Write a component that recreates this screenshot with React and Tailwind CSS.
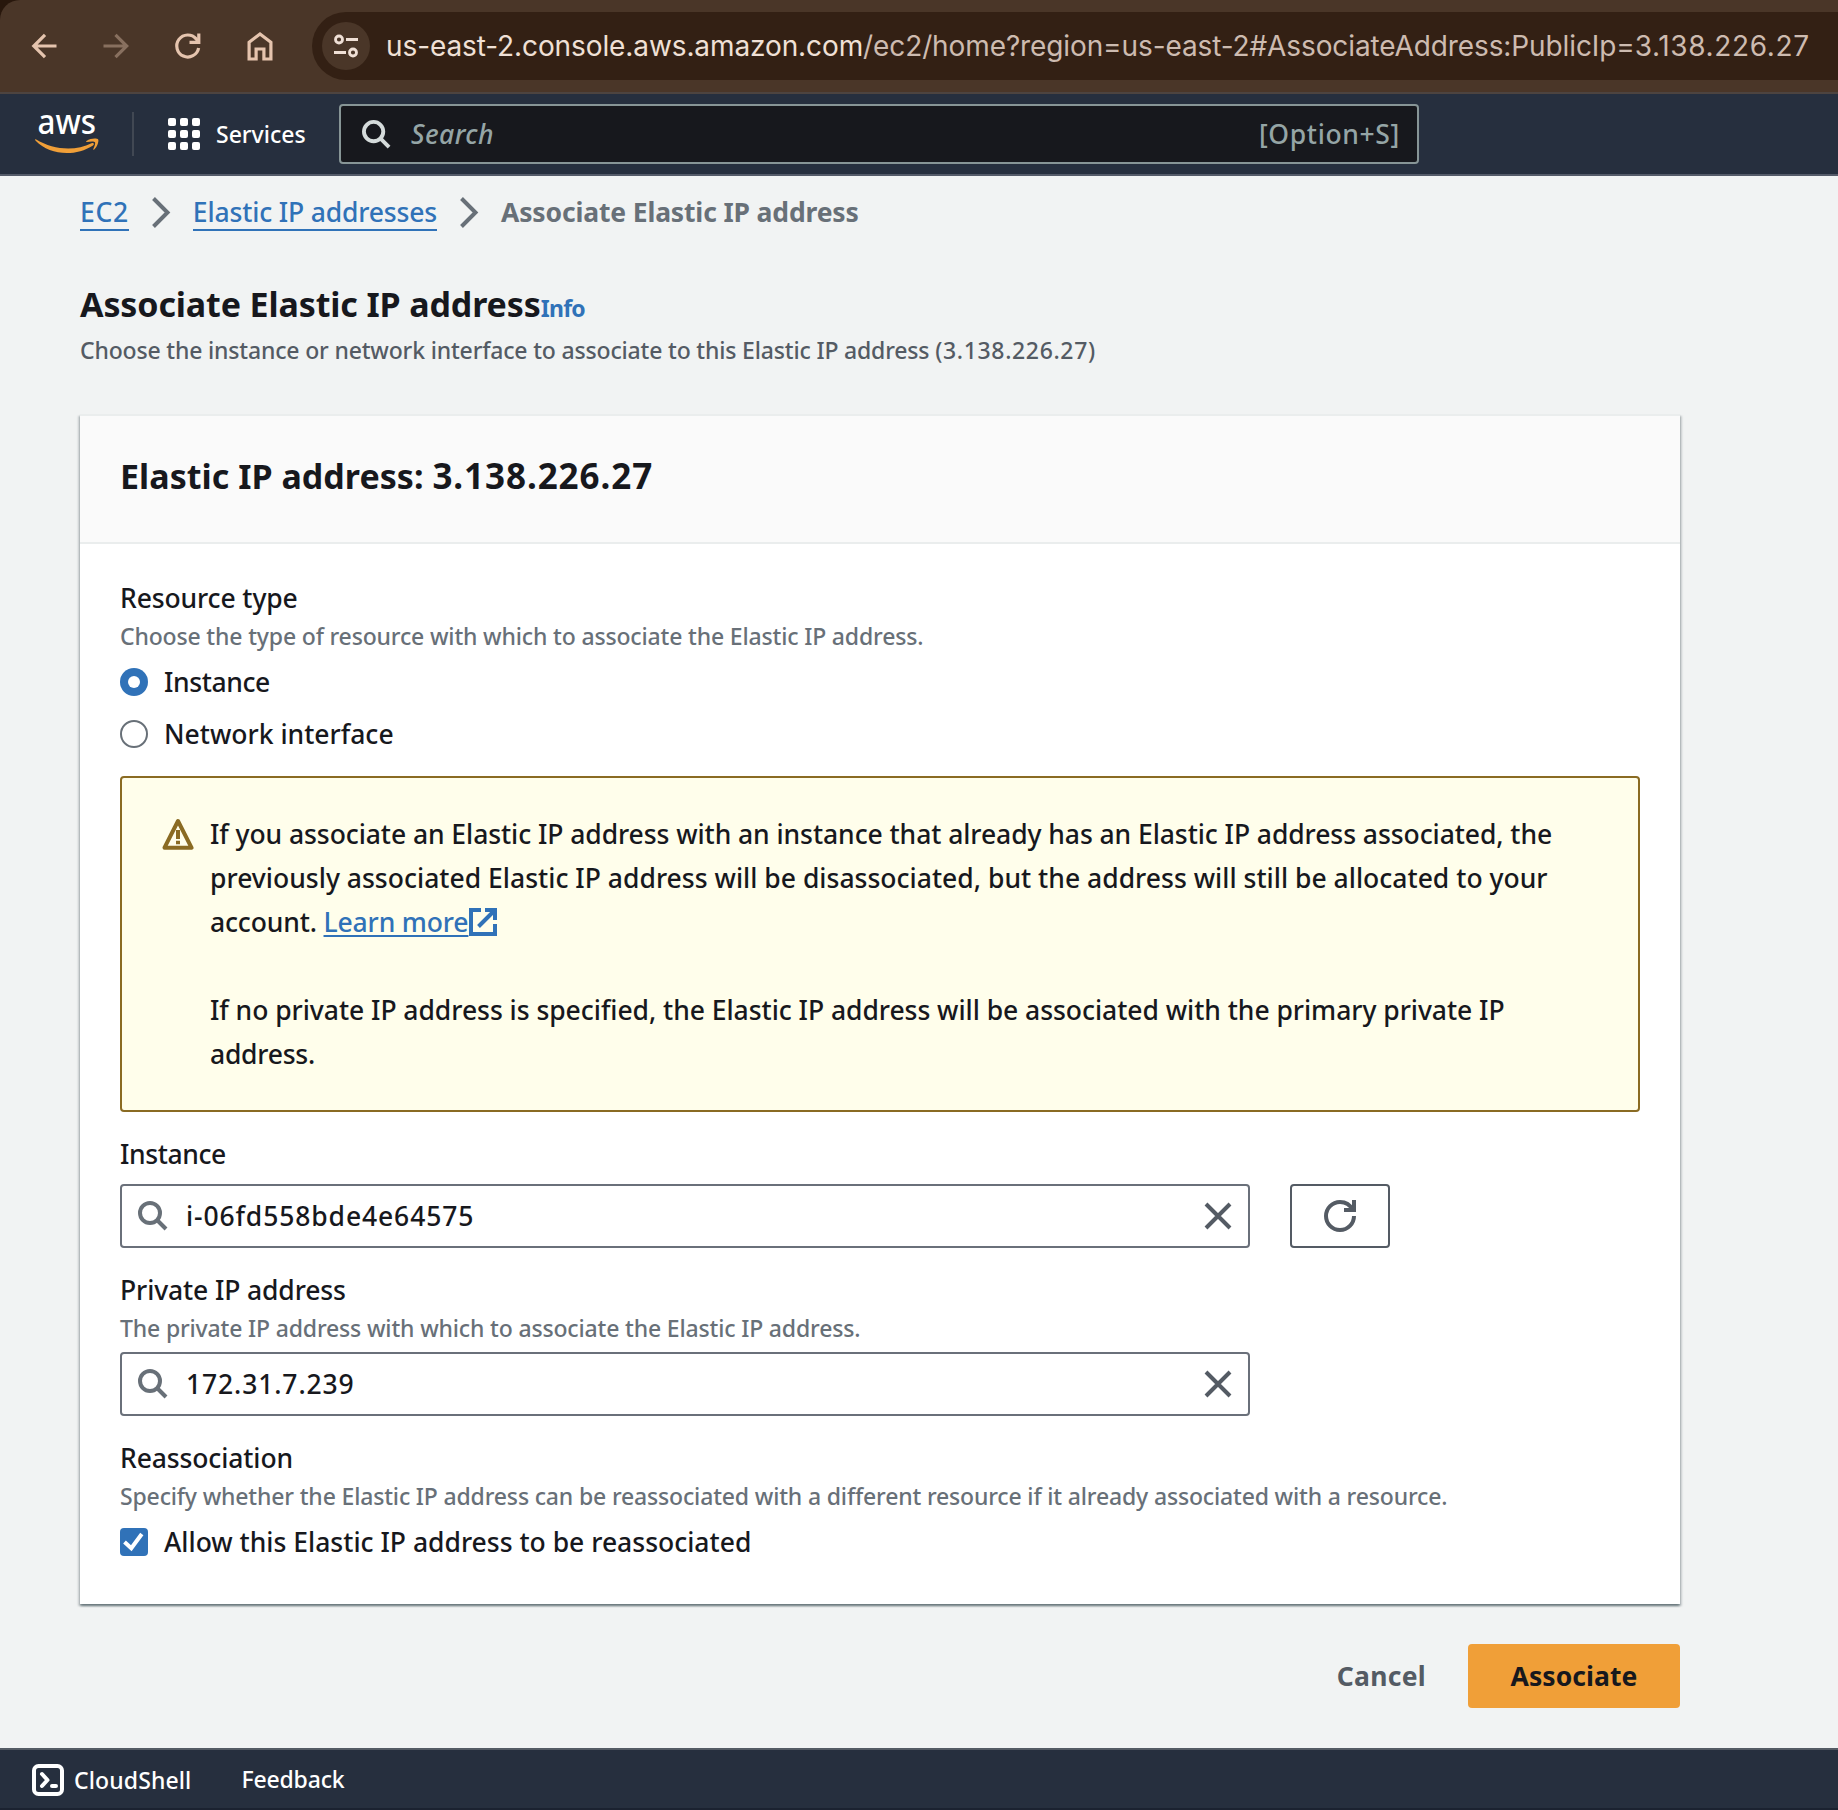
import React from "react";

function SearchIcon({ className }) {
  return (
    <svg className={className} viewBox="0 0 30 30" fill="none" stroke="currentColor" strokeWidth="4">
      <circle cx="12" cy="12" r="10" />
      <path d="M19 19l9 9" />
    </svg>
  );
}

function CloseIcon() {
  return (
    <svg className="size-7 shrink-0 text-[#545b64]" viewBox="0 0 28 28" fill="none" stroke="currentColor" strokeWidth="4">
      <path d="M2 2l24 24M26 2L2 26" />
    </svg>
  );
}

function Chevron() {
  return (
    <svg className="mt-0.5 h-8 w-5 text-[#687078]" viewBox="0 0 20 32" fill="none" stroke="currentColor" strokeWidth="4">
      <path d="M2.5 2.5L16.5 16.5L2.5 30.5" />
    </svg>
  );
}

function BrowserBar() {
  return (
    <div className="bg-[#28170c]">
      <div className="flex h-[94px] items-center rounded-tl-[20px] border-b-2 border-[#4d4440] bg-[#4a3628] text-[#e5c4ae]">
        <svg className="ml-[31px] size-7" viewBox="0 0 28 28" fill="none" stroke="currentColor" strokeWidth="3.2">
          <path d="M25.5 14H3.5M14 2.8L2.8 14L14 25.2" />
        </svg>
        <svg className="ml-[43px] size-7 text-[#88705f]" viewBox="0 0 28 28" fill="none" stroke="currentColor" strokeWidth="3.2">
          <path d="M1.5 14H24M13.5 2.8L24.7 14L13.5 25.2" />
        </svg>
        <svg className="ml-[44px] size-7" viewBox="0 0 28 28" fill="none" stroke="currentColor" strokeWidth="3.2">
          <path d="M24.6 16A11 11 0 1 1 22.2 6.9L23.6 9" />
          <path d="M24.8 1.5v8.9H15.5" />
        </svg>
        <svg className="ml-[44px] h-[30px] w-7" viewBox="0 0 28 30" fill="none" stroke="currentColor" strokeWidth="3.2">
          <path d="M3.1 28V11.2L14 2.9l10.9 8.3V28h-7V18h-7.8v10z" />
        </svg>
        <div className="ml-[38px] flex h-[68px] flex-1 items-center rounded-l-[34px] bg-[#332014] pl-[10px]">
          <div className="flex size-12 items-center justify-center rounded-full bg-[#4a3628] text-[#f0e0d6]">
            <svg className="size-6" viewBox="0 0 24 24" fill="none" stroke="currentColor" strokeWidth="2.8">
              <circle cx="5" cy="5.5" r="3.5" />
              <path d="M12 5.5h12M0 18.5h12" />
              <circle cx="19" cy="18.5" r="3.5" />
            </svg>
          </div>
          <div className="ml-4 font-['Inter',sans-serif] text-[28px] whitespace-nowrap text-[#cdbbb0]">
            <span className="tracking-[-0.1px] text-[#f0e0d6]">us-east-2.console.aws.amazon.com</span>
            <span className="tracking-[-0.11px]">/ec2/home?region=us-east-2#AssociateAddress:PublicIp=</span>
            <span className="tracking-[0.65px]">3.138.226.27</span>
          </div>
        </div>
      </div>
    </div>
  );
}

function NavBar() {
  return (
    <div className="flex h-[82px] items-center border-b-2 border-[#545b69] bg-[#262f3e] text-white">
      <svg className="mb-[6px] ml-[35px] h-[46px] w-[65px] overflow-visible" viewBox="0 0 65 46">
        <text x="2.5" y="26" textLength="58.5" lengthAdjust="spacingAndGlyphs" fill="#fff" fontFamily="Noto Sans, sans-serif" fontWeight="500" fontSize="35">aws</text>
        <path d="M0.8 31.2C19 42.5 41 43 56.5 35.2C58.5 34.3 60 36 58 37.4C40 49 15 47.5 0.4 32.5C0 31.8 0 31 0.8 31.2Z" fill="#f09f38" />
        <path d="M51.5 33C56 29.8 62.5 30.3 63.2 31.5C64 33 62.5 38.5 59.2 41.5C58.5 42 58 41.7 58.3 41C59.5 38.5 60.7 35.3 60 34.3C59.3 33.2 55 33.6 52 34C51 34.1 50.8 33.6 51.5 33Z" fill="#f09f38" />
      </svg>
      <div className="ml-8 h-11 w-0.5 bg-[#414853]" />
      <div className="ml-[34px] grid size-8 grid-cols-3 gap-1">
        {Array.from({ length: 9 }, (_, i) => (
          <div key={i} className="rounded-[2px] bg-white" />
        ))}
      </div>
      <div className="ml-4 w-[90px] text-[23px] font-medium">Services</div>
      <div className="ml-[33px] flex h-[60px] w-[1080px] items-center rounded-[4px] border-2 border-[#879596] bg-[#17181d] pr-[17px] pl-[21px] text-[26.5px] font-medium text-[#95a5a6]">
        <SearchIcon className="size-[29px] text-[#d5dbdb]" />
        <span className="ml-5 flex-1 pt-0.5 tracking-[0.4px] italic">Search</span>
        <span className="pt-0.5 tracking-[0.65px]">[Option+S]</span>
      </div>
    </div>
  );
}

function Label({ children }) {
  return <div className="text-[26.5px] leading-9 font-medium tracking-[-0.12px]">{children}</div>;
}

function Hint({ children }) {
  return <div className="mt-1 text-[23px] leading-8 font-medium tracking-[-0.16px] whitespace-nowrap text-[#687078]">{children}</div>;
}

function SearchInput({ value }) {
  return (
    <div className="flex h-16 w-[1130px] items-center rounded-[4px] border-2 border-[#6a707a] bg-white pr-4 pl-4">
      <SearchIcon className="size-[30px] text-[#687078]" />
      <span className="ml-[18px] flex-1 pt-0.5 text-[26.5px] font-medium tracking-[0.88px]">{value}</span>
      <CloseIcon />
    </div>
  );
}

function ExternalIcon() {
  return (
    <svg className="ml-px inline-block size-7 align-[-4px] text-[#3072b8]" viewBox="0 0 28 28" fill="none" stroke="currentColor" strokeWidth="4">
      <path d="M12 2H2v24h24V16" />
      <path d="M16 2h10v10M26 2L9.5 18.5" />
    </svg>
  );
}

function WarningAlert() {
  return (
    <div className="mt-6 flex h-[336px] rounded-[4px] border-2 border-[#8a6b23] bg-[#fffeeb] pt-[34px] pl-10 text-[26.5px] leading-[44px] font-medium whitespace-nowrap">
      <svg className="mt-[6px] size-8 shrink-0 text-[#8a6b23]" viewBox="0 0 32 32" fill="none" stroke="currentColor" strokeWidth="4" strokeLinejoin="round">
        <path d="M16 3L29.5 29.7H2.5z" />
        <path d="M16 12v9M16 22.7v3.5" />
      </svg>
      <div className="ml-4">
        <div className="tracking-[-0.07px]">If you associate an Elastic IP address with an instance that already has an Elastic IP address associated, the</div>
        <div className="tracking-[0.015px]">previously associated Elastic IP address will be disassociated, but the address will still be allocated to your</div>
        <div className="tracking-[-0.15px]">
          account.{" "}
          <a className="text-[#3072b8] underline decoration-2 underline-offset-[3px]">Learn more</a>
          <ExternalIcon />
        </div>
        <div className="mt-11 tracking-[-0.04px]">If no private IP address is specified, the Elastic IP address will be associated with the primary private IP</div>
        <div className="tracking-[-0.25px]">address.</div>
      </div>
    </div>
  );
}

export default function App() {
  return (
    <div className="flex h-[1810px] w-[1838px] flex-col overflow-hidden bg-[#f1f3f3] font-['Noto_Sans',sans-serif] text-[#17181d]">
      <BrowserBar />
      <NavBar />
      <main className="w-[1680px] flex-1 pt-[18px] pl-20">
        <nav className="flex h-[37px] items-start text-[26.5px] leading-9 font-medium">
          <a className="h-[37px] border-b-2 border-[#3072b8] text-[#3072b8]"><span className="tracking-[0.7px]">EC2</span></a>
          <span className="ml-[22px]"><Chevron /></span>
          <a className="ml-[22px] h-[37px] border-b-2 border-[#3072b8] tracking-[-0.16px] text-[#3072b8]">Elastic IP addresses</a>
          <span className="ml-[22px]"><Chevron /></span>
          <span className="ml-[22px] font-bold tracking-[-0.15px] text-[#687078]">Associate Elastic IP address</span>
        </nav>
        <h1 className="mt-[51px] h-[44px] text-[34px] leading-[44px] font-bold tracking-[-0.13px]">
          Associate Elastic IP address
          <span className="text-[23px] tracking-[-0.7px] text-[#3072b8]">Info</span>
        </h1>
        <p className="mt-2 text-[23px] leading-8 font-medium tracking-[-0.17px] text-[#545b64]">
          Choose the instance or network interface to associate to this Elastic IP address{" "}
          <span className="tracking-[0.65px]">(3.138.226.27)</span>
        </p>

        <section className="mt-12 h-[1190px] bg-white shadow-[0_2px_2px_0_rgba(0,28,36,0.4),2px_2px_2px_0_rgba(0,28,36,0.15),-2px_2px_2px_0_rgba(0,28,36,0.15)]">
          <header className="h-[130px] border-y-2 border-[#eaeded] bg-[#fafafa] px-10 pt-10">
            <h2 className="text-[34px] leading-10 font-bold tracking-[0.03px]">
              Elastic IP address: <span className="text-[35px] tracking-[0.92px]">3.138.226.27</span>
            </h2>
          </header>
          <div className="px-10 pt-9">
            <Label>Resource type</Label>
            <Hint>Choose the type of resource with which to associate the Elastic IP address.</Hint>
            <div className="mt-3 flex items-center text-[26.5px] leading-9 font-medium">
              <span className="flex size-7 items-center justify-center rounded-full bg-[#3072b8]">
                <span className="size-3 rounded-full bg-white" />
              </span>
              <span className="ml-4 tracking-[-0.4px]">Instance</span>
            </div>
            <div className="mt-4 flex items-center text-[26.5px] leading-9 font-medium">
              <span className="size-7 rounded-full border-2 border-[#687078]" />
              <span className="ml-4">Network interface</span>
            </div>
            <WarningAlert />
            <div className="mt-6">
              <Label><span className="tracking-[-0.4px]">Instance</span></Label>
              <div className="mt-3 flex gap-10">
                <SearchInput value="i-06fd558bde4e64575" />
                <button className="flex h-16 w-[100px] items-center justify-center rounded-[4px] border-2 border-[#545b64] text-[#545b64]">
                  <svg className="size-8" viewBox="0 0 16 16" fill="none" stroke="currentColor" strokeWidth="2">
                    <path d="M15 8c0 3.87-3.13 7-7 7s-7-3.13-7-7 3.13-7 7-7c2.79 0 5.2 1.63 6.33 4" />
                    <path d="M10 5h5V0" />
                  </svg>
                </button>
              </div>
            </div>
            <div className="mt-6">
              <Label>Private IP address</Label>
              <Hint>The private IP address with which to associate the Elastic IP address.</Hint>
              <div className="mt-2"><SearchInput value="172.31.7.239" /></div>
            </div>
            <div className="mt-6">
              <Label>Reassociation</Label>
              <Hint>Specify whether the Elastic IP address can be reassociated with a different resource if it already associated with a resource.</Hint>
              <div className="mt-3 flex items-center text-[26.5px] leading-9 font-medium">
                <span className="flex size-7 items-center justify-center rounded-[4px] bg-[#3072b8]">
                  <svg className="size-7" viewBox="0 0 28 28" fill="none" stroke="#fff" strokeWidth="4">
                    <path d="M4.5 14l6.8 6.3L21.8 6" />
                  </svg>
                </span>
                <span className="ml-4">Allow this Elastic IP address to be reassociated</span>
              </div>
            </div>
          </div>
        </section>

        <div className="mt-10 flex items-center justify-end text-[26.5px] font-bold">
          <button className="mr-[42px] pt-0.5 tracking-[0.3px] text-[#545b64]">Cancel</button>
          <button className="h-16 w-[212px] rounded-[4px] bg-[#f09f38] pt-0.5 tracking-[0.08px]">Associate</button>
        </div>
      </main>
      <footer className="h-[62px] shrink-0 border-t-2 border-b-2 border-t-[#545b64] border-b-[#1b2230] bg-[#262f3e]">
        <div className="flex h-full items-center pt-0.5 pl-8 text-[23px] font-medium text-white">
          <svg className="size-8" viewBox="0 0 32 32" fill="none" stroke="currentColor" strokeWidth="4" strokeLinecap="round" strokeLinejoin="round">
            <rect x="2" y="2" width="28" height="28" rx="4.5" />
            <path d="M10 10l5.5 6L10 22M20 22h4" />
          </svg>
          <span className="ml-[10px] tracking-[0.12px]">CloudShell</span>
          <span className="ml-[50px] pb-0.5 tracking-[-0.17px]">Feedback</span>
        </div>
      </footer>
    </div>
  );
}
